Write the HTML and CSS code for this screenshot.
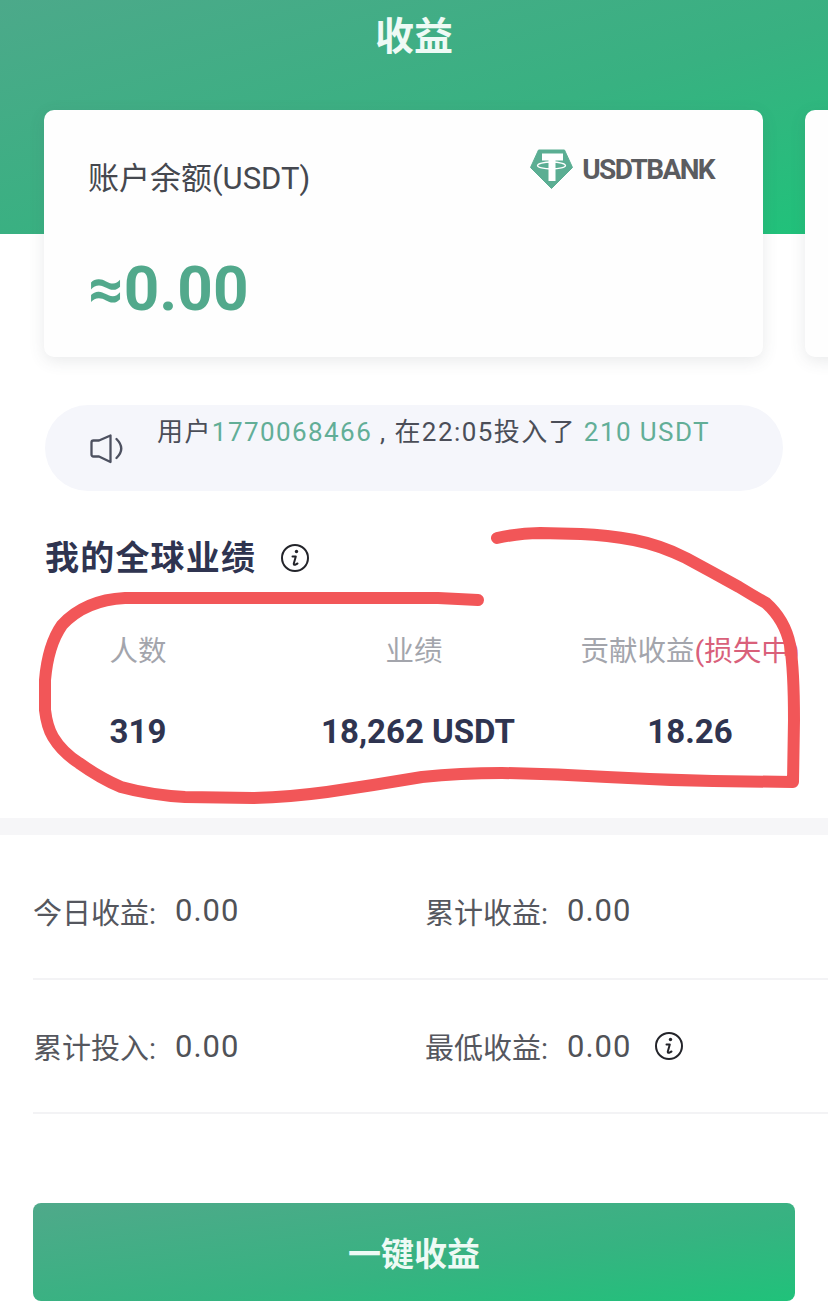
FILE: index.html
```html
<!DOCTYPE html>
<html lang="zh-CN">
<head>
<meta charset="utf-8">
<title>收益</title>
<link rel="stylesheet" href="styles.css">
</head>
<body>
<div class="page">
  <header class="hero"><h1 class="hero-title">收益</h1></header>

  <div class="carousel">
    <section class="card">
      <div class="card-top">
        <span class="card-label">账户余额(USDT)</span>
        <div class="brand">
          <svg class="brand-icon" viewBox="0 0 43 41" aria-hidden="true">
            <path d="M8.500 1H34.500L42.500 18.500L21.500 39.500L0.500 18.500Z" fill="#5bae93" stroke="#5bae93" stroke-linejoin="round"/>
            <path d="M12 4.500H33V11.500H25.500V32H18.500V11.500H12Z" fill="#fff"/>
            <ellipse cx="21.500" cy="16.500" rx="14" ry="3.500" fill="none" stroke="#fff" stroke-width="1.300"/>
          </svg>
          <span class="brand-name">USDTBANK</span>
        </div>
      </div>
      <div class="balance">≈0.00</div>
    </section>
    <section class="card"></section>
  </div>

  <div class="notice">
    <svg class="notice-icon" viewBox="0 0 36 30" aria-hidden="true">
      <path d="M2.500 8.500Q2.500 6.500 4.500 6.500H10L21.500 1.500V28L10 22.500H4.500Q2.500 22.500 2.500 20.500Z" fill="none" stroke="#4d5160" stroke-width="2.300" stroke-linejoin="round"/>
      <path d="M27.500 5Q37 14.500 27.500 24" fill="none" stroke="#4d5160" stroke-width="2.300" stroke-linecap="round"/>
    </svg>
    <p class="notice-text">用户<span class="accent">1770068466</span> , 在22:05投入了 <span class="accent">210 USDT</span></p>
  </div>

  <div class="section-head">
    <h2 class="section-title">我的全球业绩</h2>
    <svg class="info-icon" viewBox="0 0 30 30" aria-hidden="true">
      <circle cx="15" cy="15" r="13" fill="none" stroke="#23242a" stroke-width="2"/>
      <circle cx="16.500" cy="8.500" r="1.700" fill="#23242a"/>
      <path d="M12.500 13.500H15.800L13.800 20.500Q13.500 22 15 21.800L17.500 20.500" fill="none" stroke="#23242a" stroke-width="2" stroke-linecap="round" stroke-linejoin="round"/>
    </svg>
  </div>

  <div class="stats">
    <div class="stat"><div class="stat-label">人数</div><div class="stat-value">319</div></div>
    <div class="stat"><div class="stat-label">业绩</div><div class="stat-value stat-value-shift">18,262 USDT</div></div>
    <div class="stat"><div class="stat-label">贡献收益<span class="loss">(损失中)</span></div><div class="stat-value">18.26</div></div>
  </div>

  <div class="band"></div>

  <div class="row row-first">
    <div class="cell"><span class="cell-label">今日收益:</span><span class="cell-value">0.00</span></div>
    <div class="cell"><span class="cell-label">累计收益:</span><span class="cell-value">0.00</span></div>
  </div>
  <div class="row">
    <div class="cell"><span class="cell-label">累计投入:</span><span class="cell-value">0.00</span></div>
    <div class="cell"><span class="cell-label">最低收益:</span><span class="cell-value">0.00</span>
      <svg class="info-icon info-small" viewBox="0 0 30 30" aria-hidden="true">
        <circle cx="15" cy="15" r="13" fill="none" stroke="#23242a" stroke-width="2"/>
        <circle cx="16.500" cy="8.500" r="1.700" fill="#23242a"/>
        <path d="M12.500 13.500H15.800L13.800 20.500Q13.500 22 15 21.800L17.500 20.500" fill="none" stroke="#23242a" stroke-width="2" stroke-linecap="round" stroke-linejoin="round"/>
      </svg>
    </div>
  </div>

  <button class="action" type="button">一键收益</button>

  <svg class="scribble" viewBox="0 0 828 1305" aria-hidden="true">
    <path d="M478 600L438 598L125 598Q85 600 62 625Q48 645 45 680L45 710Q47 727 53 737Q62 752 79 763Q100 778 121 787Q150 795 185 797L253 798Q290 797 327 792Q375 785 422 777Q460 773 502 773Q555 774 607 777Q660 780 713 781L793 782L794 720Q794 670 790 645Q785 620 766 603Q752 595 739 587Q712 572 686 558Q660 545 634 540Q607 535 581 534L540 533Q520 533 497 538" fill="none" stroke="#f25658" stroke-width="12" stroke-linecap="round" stroke-linejoin="round"/>
  </svg>
</div>
</body>
</html>
```
FILE: styles.css
```css
* { box-sizing: border-box; }
html, body { margin: 0; padding: 0; background: #fff; }
.page {
  position: relative;
  width: 828px;
  height: 1305px;
  overflow: hidden;
  font-family: Roboto, "Noto Sans CJK SC", sans-serif;
  color: #2f3450;
}
.hero {
  height: 234px;
  background: linear-gradient(to bottom right, #4ca98a 0%, #38b181 55%, #20c27a 100%);
  padding-top: 12px;
}
.hero-title {
  margin: 0;
  text-align: center;
  font-size: 39px;
  line-height: 50px;
  font-weight: 700;
  color: #eefaf5;
}
.carousel {
  display: flex;
  gap: 42px;
  margin-top: -124px;
  padding-left: 44px;
  width: 1700px;
}
.card {
  flex: none;
  width: 719px;
  height: 247px;
  background: #fefefe;
  border-radius: 10px;
  box-shadow: 0 4px 16px rgba(70, 80, 90, .12);
  padding: 36px 49px 0 44px;
}
.card-top { display: flex; justify-content: space-between; align-items: flex-start; }
.card-label { font-size: 31px; line-height: 66px; color: #45484f; }
.brand { display: flex; align-items: center; gap: 9px; margin-left: auto; margin-top: 3px; }
.brand-icon { width: 43px; height: 41px; }
.brand-name {
  font-size: 28px;
  font-weight: 700;
  color: #5b5c60;
  letter-spacing: -1.600px;
}
.balance {
  margin-top: 42px;
  font-size: 62px;
  line-height: 70px;
  font-weight: 700;
  color: #52a98c;
}
.notice {
  display: flex;
  align-items: flex-start;
  width: 738px;
  height: 86px;
  margin: 48px 0 0 45px;
  padding: 29px 0 0 44px;
  border-radius: 43px;
  background: #f5f6fb;
}
.notice-icon { width: 36px; height: 30px; flex: none; }
.notice-text {
  margin: -17px 0 0 32px;
  font-size: 26px;
  line-height: 30px;
  letter-spacing: 1.420px;
  color: #4b4e58;
  white-space: nowrap;
}
.accent { color: #62ae97; }
.section-head {
  display: flex;
  align-items: center;
  gap: 24px;
  margin: 42px 0 0 45px;
  height: 50px;
}
.section-title {
  margin: 0;
  font-size: 34px;
  line-height: 50px;
  font-weight: 700;
  letter-spacing: 1.200px;
  color: #2f3450;
}
.info-icon { width: 30px; height: 30px; flex: none; }
.stats {
  display: grid;
  grid-template-columns: repeat(3, 276px);
  margin-top: 49px;
  height: 186px;
}
.stat { display: flex; flex-direction: column; align-items: center; white-space: nowrap; min-width: 0; }
.stat-label { font-size: 28.500px; line-height: 40px; color: #a3a5ac; }
.loss { color: #d9607a; }
.stat-value { margin-top: 40px; font-size: 33px; line-height: 40px; font-weight: 700; color: #2f3450; }
.stat-value-shift { margin-left: 8px; }
.band { height: 17px; background: #f6f6f8; }
.row {
  display: grid;
  grid-template-columns: 392px 1fr;
  margin-left: 33px;
  border-bottom: 2px solid #f3f3f5;
  height: 134px;
  align-items: center;
}
.row-first { height: 145px; padding-top: 8px; }
.cell { display: flex; align-items: center; white-space: nowrap; }
.cell-label { font-size: 29px; color: #55575e; width: 142px; }
.cell-value { font-size: 31px; color: #505257; letter-spacing: 1px; }
.info-small { margin-left: 23px; }
.action {
  display: block;
  width: 762px;
  height: 98px;
  margin: 89px 0 0 33px;
  border: 0;
  border-radius: 8px;
  background: linear-gradient(to bottom right, #4fa98a 0%, #36b381 60%, #20c27a 100%);
  color: #eefaf5;
  font: 700 33px Roboto, "Noto Sans CJK SC", sans-serif;
}
.scribble { position: absolute; inset: 0; width: 828px; height: 1305px; pointer-events: none; }
```
